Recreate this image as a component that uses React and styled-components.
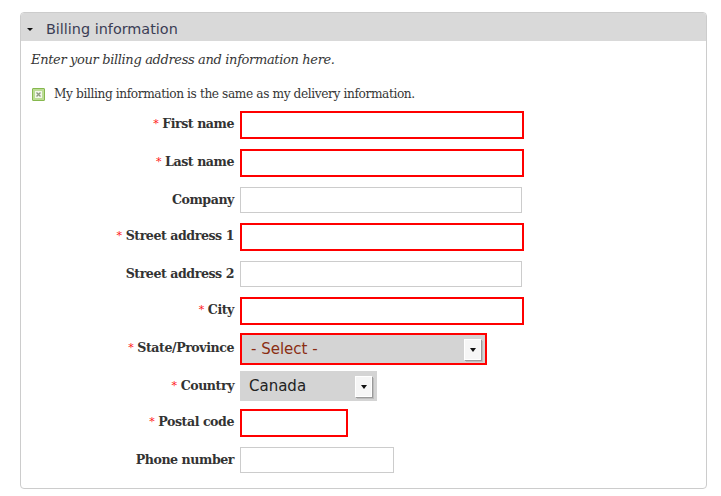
import React from "react";
import styled, { createGlobalStyle } from "styled-components";

const Global = createGlobalStyle`
  html, body { margin: 0; padding: 0; background: #fff; }
  body { font-family: "DejaVu Serif", serif; }
`;

const Page = styled.div`
  padding: 12px 14px 0 20px;
`;

const Panel = styled.section`
  width: 685px;
  border: 1px solid #cccccc;
  border-radius: 4px;
  overflow: hidden;
  padding-bottom: 15px;
`;

const Header = styled.div`
  box-sizing: border-box;
  height: 28px;
  background: #d9d9d9;
  display: flex;
  align-items: center;
  padding: 3px 0 0 6px;
  gap: 13px;
  font-family: "DejaVu Sans", Verdana, sans-serif;
  font-size: 14.4px;
  color: #3b3d55;
`;

const Caret = styled.span`
  width: 0;
  height: 0;
  border-left: 3px solid transparent;
  border-right: 3px solid transparent;
  border-top: 3.5px solid #111;
  margin-top: 1px;
`;

const Body = styled.div`
  padding: 0 10px;
  color: #363636;
`;

const Intro = styled.p`
  margin: 10px 0 0;
  font-style: italic;
  font-size: 13px;
  letter-spacing: -0.35px;
  line-height: 18px;
`;

const CheckRow = styled.label`
  display: flex;
  align-items: center;
  gap: 9px;
  margin: 16px 0 0 1px;
  font-size: 12.2px;
  letter-spacing: -0.4px;
  line-height: 18px;
`;

const CheckBox = styled.span`
  width: 11px;
  height: 11px;
  border: 1px solid #86b84e;
  background: #bcdc96;
  border-radius: 1px;
  display: flex;
  align-items: center;
  justify-content: center;
  flex: none;
`;

const Fields = styled.div`
  margin-top: 8px;
  display: flex;
  flex-direction: column;
`;

const Row = styled.div`
  display: grid;
  grid-template-columns: 203px auto;
  column-gap: 6px;
  align-items: start;
  margin-top: ${(p) => p.$mt}px;
`;

const Label = styled.div`
  text-align: right;
  font-weight: bold;
  font-size: 12.6px;
  letter-spacing: -0.45px;
  line-height: 18px;
  padding-top: ${(p) => p.$pt}px;
  color: #333;
  white-space: nowrap;
`;

const Star = styled.span`
  color: #ff1a1a;
  font-weight: normal;
  font-size: 11px;
  margin-right: 4px;
  position: relative;
  top: -1px;
`;

const Input = styled.div`
  box-sizing: border-box;
  width: ${(p) => p.$w}px;
  height: ${(p) => (p.$req ? 28 : 26)}px;
  border: ${(p) => (p.$req ? "2px solid #ff0000" : "1px solid #cccccc")};
  background: #fff;
`;

const Select = styled.div`
  box-sizing: border-box;
  width: ${(p) => p.$w}px;
  height: ${(p) => p.$h}px;
  border: ${(p) => (p.$req ? "2px solid #ff0000" : "none")};
  background: #d4d4d4;
  display: flex;
  align-items: center;
  justify-content: space-between;
  padding: 0 ${(p) => (p.$req ? 4 : 5)}px 0 9px;
  font-family: "DejaVu Sans", Verdana, sans-serif;
  font-size: 15px;
  color: ${(p) => (p.$placeholder ? "#8a2d12" : "#222")};
`;

const DropButton = styled.span`
  width: 15px;
  height: 19px;
  background: #f6f6f6;
  border: 1px solid #fff;
  box-shadow: 1px 1px 0 #9a9a9a, 2px 2px 0 #bdbdbd;
  display: flex;
  align-items: center;
  justify-content: center;
  &::after {
    content: "";
    border-left: 3px solid transparent;
    border-right: 3px solid transparent;
    border-top: 4px solid #111;
    margin-top: 1px;
  }
`;

const rows = [
  { label: "First name", req: true, kind: "input", w: 284, mt: 0 },
  { label: "Last name", req: true, kind: "input", w: 284, mt: 10 },
  { label: "Company", req: false, kind: "input", w: 282, mt: 10 },
  { label: "Street address 1", req: true, kind: "input", w: 284, mt: 10 },
  { label: "Street address 2", req: false, kind: "input", w: 282, mt: 10 },
  { label: "City", req: true, kind: "input", w: 284, mt: 10 },
  { label: "State/Province", req: true, kind: "select", w: 247, h: 32, text: "- Select -", placeholder: true, mt: 8 },
  { label: "Country", req: true, kind: "select", w: 137, h: 30, text: "Canada", mt: 6, plain: true },
  { label: "Postal code", req: true, kind: "input", w: 108, mt: 8 },
  { label: "Phone number", req: false, kind: "input", w: 154, mt: 10 },
];

export default function App() {
  return (
    <>
      <Global />
      <Page>
        <Panel>
          <Header>
            <Caret />
            <span>Billing information</span>
          </Header>
          <Body>
            <Intro>Enter your billing address and information here.</Intro>
            <CheckRow>
              <CheckBox>
                <svg width="7" height="7" viewBox="0 0 7 7">
                  <rect x="0" y="0" width="7" height="7" fill="#f2f7ea" />
                  <path d="M1.5 1.5 L5.5 5.5 M5.5 1.5 L1.5 5.5" stroke="#8f9a82" strokeWidth="1.4" />
                </svg>
              </CheckBox>
              My billing information is the same as my delivery information.
            </CheckRow>
            <Fields>
              {rows.map((r) => (
                <Row key={r.label} $mt={r.mt}>
                  <Label $pt={r.kind === "select" ? 6 : 4}>
                    {r.req && <Star>*</Star>}
                    {r.label}
                  </Label>
                  {r.kind === "input" ? (
                    <Input $w={r.w} $req={r.req} />
                  ) : (
                    <Select
                      $w={r.w}
                      $h={r.h}
                      $req={!r.plain}
                      $placeholder={r.placeholder}
                    >
                      <span>{r.text}</span>
                      <DropButton />
                    </Select>
                  )}
                </Row>
              ))}
            </Fields>
          </Body>
        </Panel>
      </Page>
    </>
  );
}
